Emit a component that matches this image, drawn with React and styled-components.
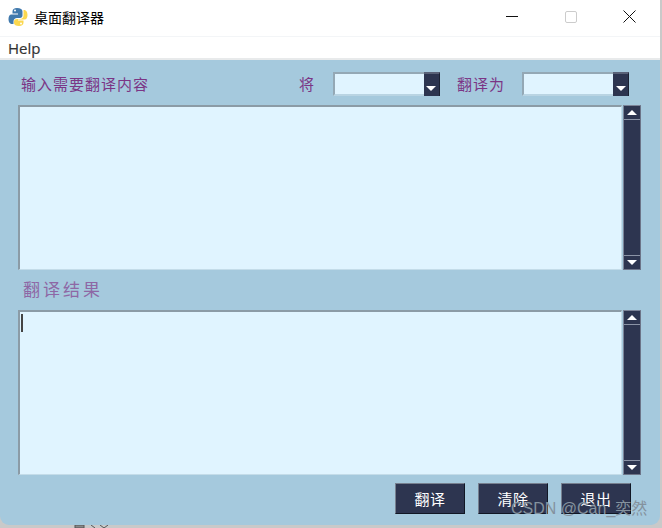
import React from "react";
import styled, { createGlobalStyle } from "styled-components";

const Global = createGlobalStyle`
  html, body { margin: 0; padding: 0; background: #fff; }
  #root { width: 662px; height: 528px; overflow: hidden; }
  * { box-sizing: border-box; }
`;
const CJK = `"Noto Sans CJK SC", "Liberation Sans", sans-serif`;

const Page = styled.div`
  position: relative; width: 662px; height: 528px; background: #c9c9c9; overflow: hidden;
`;
const Win = styled.div`
  width: 660px; height: 525px; display: flex; flex-direction: column;
  border-radius: 0 0 9px 9px; overflow: hidden; background: #a5c9dd;
`;
const TitleBar = styled.div`
  height: 36px; flex: none; background: #fff; display: flex; align-items: center; padding-left: 8px;
`;
const Title = styled.span`
  font: 14px/20px ${CJK}; color: #000; margin: -3px 0 0 6px; flex: 1;
`;
const WinControls = styled.div`display: flex; align-items: center; margin: -3px 1px 0 0;`;
const WinButton = styled.div`
  width: 59px; height: 36px; display: flex; align-items: center; justify-content: center;
`;
const MenuBar = styled.div`
  height: 24px; flex: none; background: #fff; border-top: 1px solid #f3f5f7; border-bottom: 2px solid #e8eaeb;
  padding-left: 8px; font: 15px/22px "Open Sans", "Liberation Sans", sans-serif; color: #333; -webkit-text-stroke: .2px #333;
`;
const Body = styled.div`
  flex: 1; display: flex; flex-direction: column; padding: 12px 0 0 18px;
`;
const TopRow = styled.div`display: flex; align-items: center; height: 24px; margin-bottom: 9px;`;
const Label = styled.span`
  font: 15px/24px ${CJK}; color: #7b3585; letter-spacing: 1px; margin: ${p => p.$m || 0};
`;
const Spacer = styled.div`flex: 1;`;
const Combo = styled.div`
  width: ${p => p.$w}px; height: 24px; display: flex; background: #e0f4ff; margin-left: ${p => p.$ml}px;
  border-top: 2px solid #94a8b5; border-left: 2px solid #94a8b5; border-bottom: 2px solid #b9d4e3;
`;
const ComboField = styled.div`flex: 1;`;
const ComboArrow = styled.div`
  width: 16px; margin: -2px 0 -2px 0; background: #2d3550; display: flex; align-items: flex-end; justify-content: center;
  padding-bottom: 5px; border-top: 2px solid #5a6278; border-right: 1px solid #1c2233;
`;
const ComboGutter = styled.div`width: 31px; flex: none;`;
const TextRow = styled.div`display: flex; height: 165px;`;
const TextBox = styled.div`
  width: 604px; background: #e0f4ff; border: 1px solid #c4dce9; border-top: 2px solid #8b9ba6; border-left: 2px solid #8b9ba6;
  padding: 2px 0 0 1px;
`;
const Caret = styled.div`width: 2px; height: 18px; background: #444;`;
const Scroll = styled.div`
  width: 18px; margin-left: 1px; display: flex; flex-direction: column; background: #2d3550; border: 1px solid #6c7488; border-top-color: #7c8498; border-left-color: #7c8498;
`;
const ScrollEnd = styled.div`
  height: 14px; flex: none; background: #2d3550; display: flex; align-items: center; justify-content: center;
  border-${p => p.$side}: 1px solid #8b93a6;
`;
const Track = styled.div`flex: 1; background: #2d3550;`;
const ResultLabel = styled.div`
  height: 40px; padding: 7px 0 0 5px; font: 17px/24px ${CJK}; color: #8c5d9f; letter-spacing: 3px; opacity: .9;
`;
const Buttons = styled.div`display: flex; gap: 13px; padding-left: 377px; margin-top: 8px;`;
const Btn = styled.div`
  width: 70px; height: 31px; background: #2d3550; color: #fff; display: flex; align-items: center; justify-content: center;
  font: 15px/20px ${CJK}; letter-spacing: .5px;
  border: 1px solid; border-color: #77808f #111725 #111725 #77808f;
`;
const Watermark = styled.div`
  position: absolute; left: 511px; top: 499px; font: 16px/20px "Liberation Sans", ${CJK}; color: #84929e; white-space: nowrap;
`;
const Smudge = styled.svg`position: absolute; left: 70px; top: 525px;`;

const Up = () => <svg width="10" height="5" viewBox="0 0 10 5"><path d="M5 0 10 5H0Z" fill="#fff" /></svg>;
const Down = () => <svg width="10" height="5" viewBox="0 0 10 5"><path d="M0 0H10L5 5Z" fill="#fff" /></svg>;
const ScrollBar = () => (
  <Scroll>
    <ScrollEnd $side="bottom"><Up /></ScrollEnd>
    <Track />
    <ScrollEnd $side="top"><Down /></ScrollEnd>
  </Scroll>
);
const Select = ({ w, ml }) => (
  <Combo $w={w} $ml={ml}><ComboField /><ComboArrow><Down /></ComboArrow></Combo>
);
const PyLogo = () => (
  <svg width="20" height="20" viewBox="0 0 20 20" style={{ marginTop: -3 }}>
    <path d="M9 1C6 1 4.5 2.3 4.5 4.5V6.5H10V7.5H3.5C1.5 7.5 .5 9.5 .5 12S1.5 17 4 17H5.5V14.5C5.5 12.5 7 11 9 11H12C13.500 11 14.500 10 14.500 8.500V4.500C14.500 2.500 12.500 1 9 1Z" fill="#4079ad" />
    <path d="M11 19C14 19 15.500 17.700 15.500 15.500V13.500H10V12.500H16.500C18.500 12.500 19.500 10.500 19.500 8S18.500 3 16 3H15.500V8.500C15.500 10.500 14 12 12 12H9C7 12 6 13 6 14.500V16C6 18 8 19 11 19Z" fill="#fbd850" />
    <circle cx="7" cy="3.600" r="1" fill="#fff" />
    <circle cx="13" cy="16.400" r="1" fill="#fff" />
  </svg>
);

export default function App() {
  return (
    <Page>
      <Global />
      <Win>
        <TitleBar>
          <PyLogo />
          <Title>桌面翻译器</Title>
          <WinControls>
            <WinButton><svg width="12" height="2"><path d="M0 .5H12" stroke="#111" /></svg></WinButton>
            <WinButton><svg width="12" height="12"><rect x=".5" y=".5" width="11" height="11" rx="1.500" fill="none" stroke="#ccc" /></svg></WinButton>
            <WinButton><svg width="13" height="13"><path d="M.5 .5 12.500 12.500M12.500 .5 .5 12.500" stroke="#111" /></svg></WinButton>
          </WinControls>
        </TitleBar>
        <MenuBar>Help</MenuBar>
        <Body>
          <TopRow>
            <Label $m="0 0 0 3px">输入需要翻译内容</Label>
            <Spacer />
            <Label>将</Label>
            <Select w={107} ml={18} />
            <Label $m="0 0 0 17px">翻译为</Label>
            <Select w={107} ml={17} />
            <ComboGutter />
          </TopRow>
          <TextRow><TextBox /><ScrollBar /></TextRow>
          <ResultLabel>翻译结果</ResultLabel>
          <TextRow><TextBox><Caret /></TextBox><ScrollBar /></TextRow>
          <Buttons>
            <Btn>翻译</Btn>
            <Btn>清除</Btn>
            <Btn>退出</Btn>
          </Buttons>
        </Body>
      </Win>
      <Smudge width="40" height="3"><path d="M5 0H14V3H5ZM21 0 25 3M30 0 34 3M38 0 34 3" stroke="#555" fill="#888" /></Smudge>
      <Watermark>CSDN @Can_奕然</Watermark>
    </Page>
  );
}
